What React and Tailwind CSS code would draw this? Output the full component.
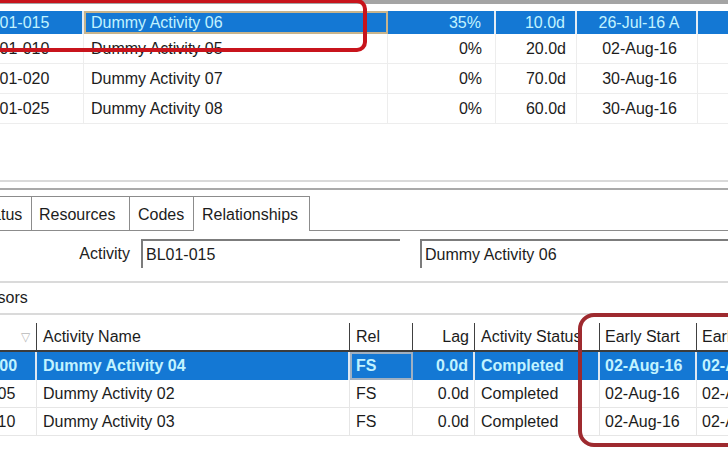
import React from "react";

const topRows = [
  { id: "BL01-010", name: "Dummy Activity 05", pct: "0%", dur: "20.0d", start: "02-Aug-16" },
  { id: "BL01-020", name: "Dummy Activity 07", pct: "0%", dur: "70.0d", start: "30-Aug-16" },
  { id: "BL01-025", name: "Dummy Activity 08", pct: "0%", dur: "60.0d", start: "30-Aug-16" },
];

const preds = [
  { id: "BL01-000", name: "Dummy Activity 04", rel: "FS", lag: "0.0d", status: "Completed", es: "02-Aug-16", ef: "02-Aug-16" },
  { id: "BL01-005", name: "Dummy Activity 02", rel: "FS", lag: "0.0d", status: "Completed", es: "02-Aug-16", ef: "02-Aug-16" },
  { id: "BL01-010", name: "Dummy Activity 03", rel: "FS", lag: "0.0d", status: "Completed", es: "02-Aug-16", ef: "02-Aug-16" },
];

const topGrid = "grid grid-cols-[108px_304px_108px_81px_121px_1fr] -ml-[24px]";
const botGrid = "grid grid-cols-[96px_313px_63px_62px_125px_97px_1fr] -ml-[59px]";

const TopTable = () => (
  <div className="pt-[7px]">
    {/* selected row */}
    <div className={`${topGrid} h-[23px] text-[#c2f3ff]`}>
      <div className="bg-[#1478d4] border-r-2 border-[#e4ecf4] pl-[4px] flex items-center">BL01-015</div>
      <div className="bg-[#1478d4] border-2 border-[#c8b48c] pl-[5px] flex items-center">Dummy Activity 06</div>
      <div className="bg-[#1478d4] border-r-2 border-[#e4ecf4] pr-[13px] flex items-center justify-end">35%</div>
      <div className="bg-[#1478d4] border-r-2 border-[#e4ecf4] pr-[10px] flex items-center justify-end">10.0d</div>
      <div className="bg-[#1478d4] border-r-2 border-[#e4ecf4] pl-[5px] flex items-center justify-center">26-Jul-16 A</div>
      <div className="bg-[#1478d4]" />
    </div>
    {topRows.map((r) => (
      <div key={r.id} className={`${topGrid} h-[30px] border-b border-[#ededed]`}>
        <div className="border-r border-[#ededed] pl-[4px] flex items-center">{r.id}</div>
        <div className="border-r border-[#ededed] pl-[7px] flex items-center">{r.name}</div>
        <div className="border-r border-[#ededed] pr-[13px] flex items-center justify-end">{r.pct}</div>
        <div className="border-r border-[#ededed] pr-[10px] flex items-center justify-end">{r.dur}</div>
        <div className="border-r border-[#ededed] pl-[5px] flex items-center justify-center">{r.start}</div>
        <div />
      </div>
    ))}
  </div>
);

const Tabs = () => (
  <div className="h-[41px] flex items-end border-b border-[#8c8c8c]">
    <div className="-ml-[33px] w-[65px] h-[34px] border border-b-0 border-[#8c8c8c] pl-[9px] pt-[3px] flex items-center">Status</div>
    <div className="w-[98px] h-[34px] border border-l-0 border-b-0 border-[#8c8c8c] pl-[7px] pt-[3px] flex items-center">Resources</div>
    <div className="w-[64px] h-[34px] border border-l-0 border-b-0 border-[#8c8c8c] pl-[8px] pt-[3px] flex items-center">Codes</div>
    <div className="w-[116px] h-[35px] -mb-px bg-white border border-l-0 border-b-0 border-[#8c8c8c] pl-[8px] pt-[2px] flex items-center">Relationships</div>
  </div>
);

const Field = ({ className, children }) => (
  <div className={`h-[29px] border-t-2 border-l-2 border-[#7c7c7c] pl-[3px] flex items-center ${className}`}>
    {children}
  </div>
);

const ActivityRow = () => (
  <div className="h-[50px] pt-[8px] flex items-start">
    <div className="w-[130px] h-[29px] flex items-center justify-end text-[#222]">Activity</div>
    <Field className="ml-[11px] w-[259px]">BL01-015</Field>
    <Field className="ml-[20px] flex-1">Dummy Activity 06</Field>
  </div>
);

const BottomTable = () => (
  <div>
    <div className={`${botGrid} h-[29px] border-b-2 border-[#3c3c3c]`}>
      <div className="border-r border-[#404040] pr-[6px] flex items-center justify-end text-[12px] text-[#b8b8b8]">▽</div>
      <div className="border-r border-[#404040] pl-[6px] flex items-center">Activity Name</div>
      <div className="border-r border-[#404040] pl-[6px] flex items-center">Rel</div>
      <div className="border-r border-[#404040] pr-[5px] flex items-center justify-end">Lag</div>
      <div className="border-r border-[#404040] pl-[6px] flex items-center whitespace-nowrap">Activity Status</div>
      <div className="border-r border-[#404040] pl-[5px] flex items-center">Early Start</div>
      <div className="pl-[5px] flex items-center whitespace-nowrap">Early Finish</div>
    </div>
    {preds.map((p, i) => {
      const sel = i === 0;
      const cell = sel
        ? "bg-[#1478d4] border-r-2 border-[#dfe8f2] font-bold text-[#c2f3ff]"
        : "border-r border-[#e6e6e6]";
      return (
        <div key={p.id} className={`${botGrid} h-[28px] ${sel ? "" : "border-b border-[#e6e6e6]"}`}>
          <div className={`${cell} pl-[5px] flex items-center`}>{p.id}</div>
          <div className={`${cell} pl-[6px] flex items-center`}>{p.name}</div>
          <div className={`${cell} pl-[6px] flex items-center ${sel ? "outline-2 -outline-offset-2 outline-[#9fb0c2]" : ""}`}>{p.rel}</div>
          <div className={`${cell} pr-[5px] flex items-center justify-end`}>{p.lag}</div>
          <div className={`${cell} pl-[6px] flex items-center`}>{p.status}</div>
          <div className={`${cell} pl-[5px] flex items-center`}>{p.es}</div>
          <div className={`${cell} pl-[5px] flex items-center whitespace-nowrap`}>{p.ef}</div>
        </div>
      );
    })}
  </div>
);

export default function App() {
  return (
    <div className="relative w-[728px] h-[449px] overflow-hidden bg-white text-[16px] leading-none text-[#1c1c1c] font-['Liberation_Sans',Arial,sans-serif]">
      <div className="h-[4px] bg-[#a4a4a4]" />
      <TopTable />
      <div className="h-[56px]" />
      <div className="h-[2px] bg-[#d9d9d9]" />
      <div className="h-[6px]" />
      <div className="h-[2px] bg-[#a9a9a9]" />
      <Tabs />
      <ActivityRow />
      <div className="h-[2px] bg-[#dadada]" />
      <div className="h-[30px] flex items-center">
        <span className="-ml-[70px]">Predecessors</span>
      </div>
      <div className="h-[2px] bg-[#dadada]" />
      <div className="h-[8px]" />
      <BottomTable />

      {/* annotation boxes */}
      <div className="absolute -left-[20px] -top-[1px] w-[387px] h-[53px] border-4 border-[#c8141c] rounded-[10px] pointer-events-none" />
      <div className="absolute left-[578px] top-[313px] w-[200px] h-[134px] border-4 border-[#9e2a2f] rounded-[16px] pointer-events-none" />
    </div>
  );
}
